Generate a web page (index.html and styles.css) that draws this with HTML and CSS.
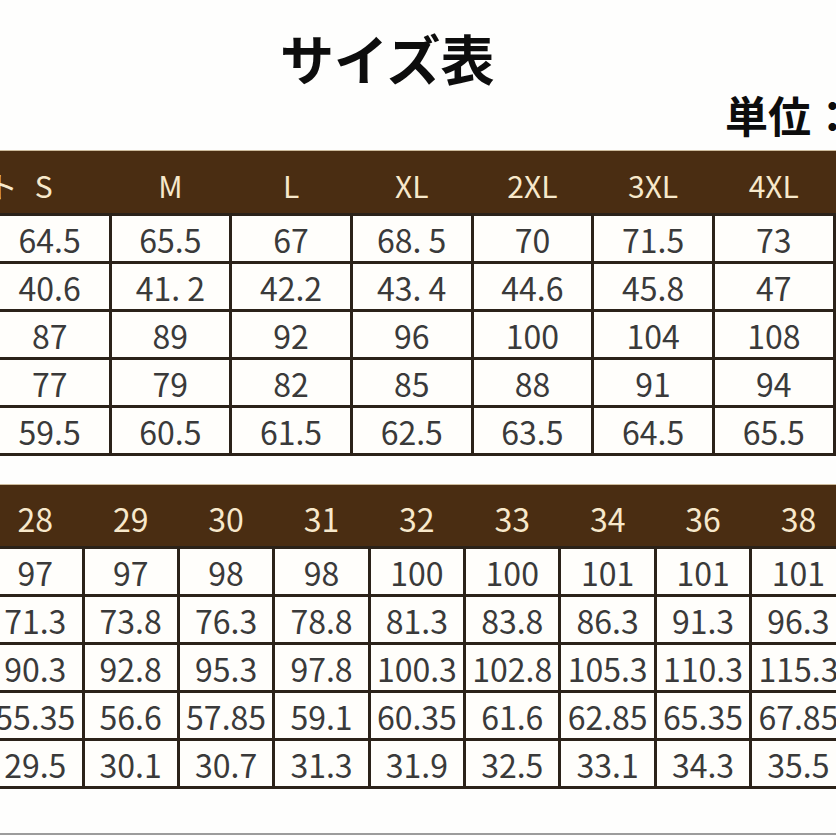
FILE: index.html
```html
<!DOCTYPE html>
<html lang="ja">
<head>
<meta charset="utf-8">
<title>サイズ表</title>
<link rel="stylesheet" href="styles.css">
</head>
<body>
<div class="page">
  <h1 class="title">サイズ表</h1>
  <div class="unit">単位：cm</div>

  <section class="sheet sheet-top">
    <div class="head">
      <div class="hcell first"><span class="cut">ト</span><span>S</span></div>
      <div class="hcell">M</div>
      <div class="hcell">L</div>
      <div class="hcell">XL</div>
      <div class="hcell">2XL</div>
      <div class="hcell">3XL</div>
      <div class="hcell">4XL</div>
      <div class="hcell"></div>
    </div>
    <div class="body">
      <div class="cell">64.5</div><div class="cell">65.5</div><div class="cell">67</div><div class="cell">68. 5</div><div class="cell">70</div><div class="cell">71.5</div><div class="cell">73</div><div class="cell"></div>
      <div class="cell">40.6</div><div class="cell">41. 2</div><div class="cell">42.2</div><div class="cell">43. 4</div><div class="cell">44.6</div><div class="cell">45.8</div><div class="cell">47</div><div class="cell"></div>
      <div class="cell">87</div><div class="cell">89</div><div class="cell">92</div><div class="cell">96</div><div class="cell">100</div><div class="cell">104</div><div class="cell">108</div><div class="cell"></div>
      <div class="cell">77</div><div class="cell">79</div><div class="cell">82</div><div class="cell">85</div><div class="cell">88</div><div class="cell">91</div><div class="cell">94</div><div class="cell"></div>
      <div class="cell">59.5</div><div class="cell">60.5</div><div class="cell">61.5</div><div class="cell">62.5</div><div class="cell">63.5</div><div class="cell">64.5</div><div class="cell">65.5</div><div class="cell"></div>
    </div>
  </section>

  <section class="sheet sheet-bottom">
    <div class="head">
      <div class="hcell">28</div>
      <div class="hcell">29</div>
      <div class="hcell">30</div>
      <div class="hcell">31</div>
      <div class="hcell">32</div>
      <div class="hcell">33</div>
      <div class="hcell">34</div>
      <div class="hcell">36</div>
      <div class="hcell">38</div>
    </div>
    <div class="body">
      <div class="cell">97</div><div class="cell">97</div><div class="cell">98</div><div class="cell">98</div><div class="cell">100</div><div class="cell">100</div><div class="cell">101</div><div class="cell">101</div><div class="cell">101</div>
      <div class="cell">71.3</div><div class="cell">73.8</div><div class="cell">76.3</div><div class="cell">78.8</div><div class="cell">81.3</div><div class="cell">83.8</div><div class="cell">86.3</div><div class="cell">91.3</div><div class="cell">96.3</div>
      <div class="cell">90.3</div><div class="cell">92.8</div><div class="cell">95.3</div><div class="cell">97.8</div><div class="cell">100.3</div><div class="cell">102.8</div><div class="cell">105.3</div><div class="cell">110.3</div><div class="cell">115.3</div>
      <div class="cell">55.35</div><div class="cell">56.6</div><div class="cell">57.85</div><div class="cell">59.1</div><div class="cell">60.35</div><div class="cell">61.6</div><div class="cell">62.85</div><div class="cell">65.35</div><div class="cell">67.85</div>
      <div class="cell">29.5</div><div class="cell">30.1</div><div class="cell">30.7</div><div class="cell">31.3</div><div class="cell">31.9</div><div class="cell">32.5</div><div class="cell">33.1</div><div class="cell">34.3</div><div class="cell">35.5</div>
    </div>
  </section>

  <div class="rule"></div>
</div>
</body>
</html>
```
FILE: styles.css
```css
html, body {
  margin: 0;
  padding: 0;
  background: #ffffff;
}

.page {
  width: 836px;
  height: 836px;
  overflow: hidden;
  background: #fefefd;
  font-family: "Noto Sans CJK JP", "Noto Sans", sans-serif;
}

.title {
  margin: 0;
  padding: 31px 0 0 280px;
  height: 54px;
  font-size: 54px;
  line-height: 54px;
  font-weight: 700;
  color: #0d0d0d;
  white-space: nowrap;
}

.unit {
  margin-top: 8px;
  padding-left: 725px;
  height: 43px;
  font-size: 43px;
  line-height: 43px;
  font-weight: 700;
  color: #0d0d0d;
  white-space: nowrap;
}

.sheet {
  width: max-content;
}

.sheet-top {
  margin-top: 14px;
  margin-left: -12.2px;
}

.sheet-bottom {
  margin-top: 28px;
  margin-left: -13.9px;
}

.head {
  display: grid;
  column-gap: 3px;
  padding: 0 3px;
  background: #4a2d12;
  border-top: 1px solid #cdbb9c;
}

.sheet-top .head {
  grid-template-columns: repeat(8, 117.7px);
  height: 62px;
}

.sheet-bottom .head {
  grid-template-columns: repeat(9, 92.4px);
  height: 61px;
}

.hcell {
  display: flex;
  align-items: center;
  justify-content: center;
  padding-top: 5px;
  color: #f7e8cb;
  font-size: 30px;
  line-height: 1;
  white-space: nowrap;
}

.sheet-bottom .hcell {
  font-size: 32px;
}

.hcell.first {
  justify-content: flex-start;
  gap: 17px;
}

.hcell .cut {
  margin-left: -3px;
}

.body {
  display: grid;
  gap: 3px;
  padding: 3px;
  background: #2b2219;
  grid-auto-rows: 45px;
}

.sheet-top .body {
  grid-template-columns: repeat(8, 117.7px);
}

.sheet-bottom .body {
  grid-template-columns: repeat(9, 92.4px);
}

.cell {
  display: flex;
  align-items: center;
  justify-content: center;
  background: #fffefb;
  color: #3a3a3a;
  font-size: 32px;
  line-height: 1;
  white-space: nowrap;
}

.rule {
  margin-top: 44px;
  height: 2px;
  background: #9c9c9c;
}
```
